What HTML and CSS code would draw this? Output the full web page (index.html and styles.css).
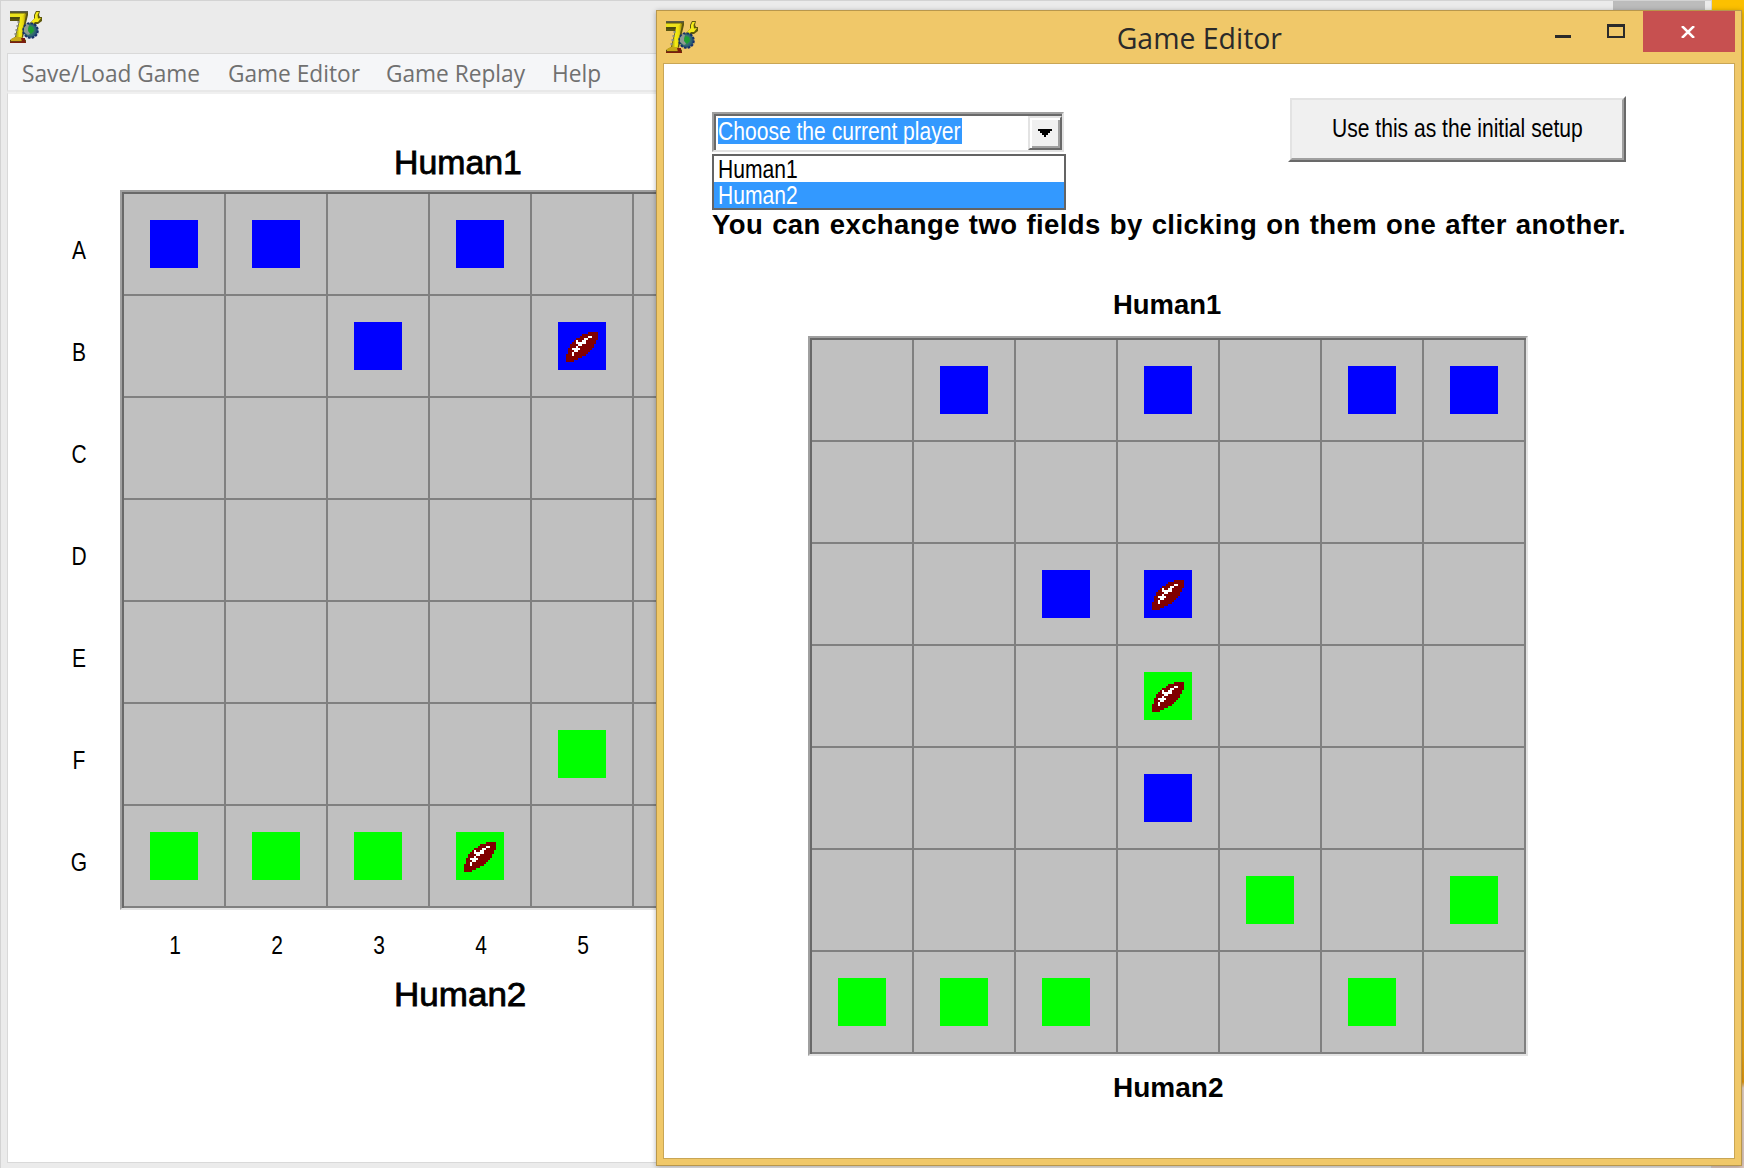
FILE: index.html
```html
<!DOCTYPE html>
<html lang="en">
<head>
<meta charset="utf-8">
<title>Game Editor</title>
<link rel="stylesheet" href="styles.css">
</head>
<body>
<svg class="defs" width="0" height="0" aria-hidden="true">
  <defs>
    <linearGradient id="gold" x1="0" y1="0" x2="1" y2="0">
      <stop offset="0" stop-color="#8a8416"/><stop offset=".4" stop-color="#f6ee12"/><stop offset=".7" stop-color="#e8d80e"/><stop offset="1" stop-color="#8d7a08"/>
    </linearGradient>
    <radialGradient id="globe" cx=".4" cy=".45" r=".6">
      <stop offset="0" stop-color="#2e9a3c"/><stop offset=".5" stop-color="#3c7a6a"/><stop offset="1" stop-color="#1d4a78"/>
    </radialGradient>
    <symbol id="app" viewBox="0 0 32 32">
      <path d="M0 0h18v4l-3 12-2 11 3 2v3H0v-3l5-3 4-16H0z" fill="#5a5510"/>
      <path d="M0 0h18v1.5H0z" fill="#5c5d48"/>
      <path d="M0 2.5h15l-1 3.5H0z" fill="#ece31c"/>
      <path d="M0 6h10v2H0z" fill="#4c4a10"/>
      <path d="M10 6l6.500-4-3 13-2 13H5l4-15z" fill="url(#gold)"/>
      <path d="M1 28l4-2h7l2 2v2H1z" fill="#c8a818"/>
      <path d="M0 30.500h16V32H0zM11 27h4v4h-3z" fill="#7c1c0c"/>
      <path d="M7.500 10h2v2h-2zM6.500 14h2v2h-2zM5.500 18h2v2h-2zM4.500 22h2v2h-2z" fill="#8f9086"/>
      <path d="M26 0h4l-1 4 1 2h2v4l-4 3h-3l-3 3-3-3 5-5V4z" fill="#5f590c"/>
      <path d="M26.500 1h2.500l-1.500 3 .5 3.500 3-.5-3 4h-3l-3 3-2-2 5-5V4z" fill="#f4ea18"/>
      <circle cx="20.500" cy="19.500" r="7.300" fill="url(#globe)" stroke="#17306a" stroke-width="2" stroke-dasharray="2.600 1.200"/>
      <path d="M14 17l3-4 2 1-1 4 2 5-2 1-4-3z" fill="#8f9a92"/>
      <path d="M19 15l4 1 1 4-3 3-3-3z" fill="#1fa033"/>
    </symbol>
    <symbol id="ball" viewBox="0 0 24 24">
      <g shape-rendering="crispEdges">
        <path fill="#800000" d="M15 5h5v4h-1v2h-1v2h-1v1h-1v1h-1v1h-1v1h-2v1h-2v1H8v1H4v-4h1v-3h1v-2h1v-1h1v-1h1V8h2V7h1V6h3z"/>
        <path fill="#fff" d="M15 7h2v1h-2zM13 8h2v1h-2zM9 9h1v1H9zM12 9h2v1h-2zM9 10h5v1H9zM10 11h2v1h-2zM9 12h1v1H9zM7 13h4v1H7zM8 14h2v1H8zM7 15h1v2H7z"/>
      </g>
    </symbol>
  </defs>
</svg>

<div class="desktop">
  <section class="window main-window">
    <header class="titlebar">
      <svg class="app-icon"><use href="#app"/></svg>
      <span class="inactive-close"></span>
    </header>
    <nav class="menu">
      <span class="menu-item save">Save/Load Game</span>
      <span class="menu-item editor">Game Editor</span>
      <span class="menu-item replay">Game Replay</span>
      <span class="menu-item help">Help</span>
    </nav>
    <div class="main-body">
      <h2 class="player">Human1</h2>
      <div class="board-area">
        <div class="row-labels">
          <span>A</span><span>B</span><span>C</span><span>D</span><span>E</span><span>F</span><span>G</span>
        </div>
        <div class="board">
          <i class="piece blue" style="grid-area:1/1"></i>
          <i class="piece blue" style="grid-area:1/2"></i>
          <i class="piece blue" style="grid-area:1/4"></i>
          <i class="piece blue" style="grid-area:2/3"></i>
          <i class="piece blue" style="grid-area:2/5"><svg><use href="#ball"/></svg></i>
          <i class="piece green" style="grid-area:6/5"></i>
          <i class="piece green" style="grid-area:7/1"></i>
          <i class="piece green" style="grid-area:7/2"></i>
          <i class="piece green" style="grid-area:7/3"></i>
          <i class="piece green" style="grid-area:7/4"><svg><use href="#ball"/></svg></i>
        </div>
      </div>
      <div class="col-labels"><span>1</span><span>2</span><span>3</span><span>4</span><span>5</span></div>
      <h2 class="player below">Human2</h2>
    </div>
  </section>

  <section class="window editor-window">
    <header class="titlebar">
      <svg class="app-icon"><use href="#app"/></svg>
      <h1 class="window-title"><span>Game Editor</span></h1>
      <div class="controls">
        <span class="minimize"></span>
        <span class="maximize"></span>
        <span class="close"><svg width="14" height="12" viewBox="0 0 14 12"><path d="M1 0l12 12M13 0L1 12" stroke="#fff" stroke-width="2.5"/></svg></span>
      </div>
    </header>
    <div class="editor-body">
      <div class="toolbar">
        <div class="combo">
          <span class="selection"><span class="sys">Choose the current player</span></span>
          <span class="arrow"><svg width="14" height="8" viewBox="0 0 14 8" shape-rendering="crispEdges"><path d="M0 0h14v2h-2v2h-2v2H8v2H6V6H4V4H2V2H0z"/></svg></span>
          <div class="options">
            <div class="option"><span class="sys">Human1</span></div>
            <div class="option selected"><span class="sys">Human2</span></div>
          </div>
        </div>
        <div class="button"><div class="face"><span class="sys">Use this as the initial setup</span></div></div>
      </div>
      <p class="hint">You can exchange two fields by clicking on them one after another.</p>
      <h2 class="player">Human1</h2>
      <div class="board">
        <i class="piece blue" style="grid-area:1/2"></i>
        <i class="piece blue" style="grid-area:1/4"></i>
        <i class="piece blue" style="grid-area:1/6"></i>
        <i class="piece blue" style="grid-area:1/7"></i>
        <i class="piece blue" style="grid-area:3/3"></i>
        <i class="piece blue" style="grid-area:3/4"><svg><use href="#ball"/></svg></i>
        <i class="piece green" style="grid-area:4/4"><svg><use href="#ball"/></svg></i>
        <i class="piece blue" style="grid-area:5/4"></i>
        <i class="piece green" style="grid-area:6/5"></i>
        <i class="piece green" style="grid-area:6/7"></i>
        <i class="piece green" style="grid-area:7/1"></i>
        <i class="piece green" style="grid-area:7/2"></i>
        <i class="piece green" style="grid-area:7/3"></i>
        <i class="piece green" style="grid-area:7/6"></i>
      </div>
      <h2 class="player below">Human2</h2>
    </div>
  </section>
</div>
</body>
</html>
```

FILE: styles.css
```css
* { box-sizing: border-box; }
html, body { height: 1168px; overflow: hidden; }
body { margin: 0; font-family: "Liberation Sans", Arial, sans-serif; color: #000; }
h1, h2, p { margin: 0; font-weight: 400; }
svg { display: block; }
.defs { position: absolute; }

.desktop {
  position: relative;
  width: 1744px;
  height: 1168px;
  overflow: hidden;
  background: linear-gradient(#fcc000 0, #fbbd00 600px, #efac18 1050px, #e59a10 1082px, #e8d5c8 1088px, #e3cdc4 1168px);
}

.window { position: absolute; display: flex; flex-direction: column; }
.app-icon { width: 32px; height: 32px; flex: none; }

/* Inactive window behind */
.main-window {
  left: 0;
  top: 0;
  width: 1712px;
  height: 1180px;
  padding: 0 7px;
  background: #ebebeb;
  border: 1px solid #d3d3d3;
}
.main-window .titlebar { display: flex; justify-content: space-between; height: 52px; padding: 10px 0 0 2px; }
.inactive-close { width: 92px; height: 32px; margin: -10px -1px 0 0; background: #bcbcbc; }
.menu {
  display: flex;
  height: 39px;
  margin-left: -1px;
  padding-left: 14px;
  background: #f5f6f8;
  border: 1px solid #d9d9d9;
  border-bottom: 2px solid #e8e8e8;
  border-right: 0;
  font: 24px/38px "Open Sans", sans-serif;
  color: #707070;
}
.menu-item { white-space: nowrap; transform-origin: 0 50%; transform: scaleX(.945); flex: none; }
.menu-item.save { width: 206px; }
.menu-item.editor { width: 158px; }
.menu-item.replay { width: 166px; }

.main-body {
  flex: none;
  height: 1071px;
  margin-left: -1px;
  background: #fff;
  border: 1px solid #d9d9d9;
  border-top: 2px solid #f0f0f0;
}
.main-body .player {
  margin: 48px 0 0 386px;
  height: 48px;
  font-size: 33.5px;
  line-height: 41px;
  -webkit-text-stroke: .8px #000;
  transform-origin: 0 50%;
  transform: scaleX(1.01);
}
.board-area { display: flex; }
.row-labels {
  display: grid;
  grid-template-rows: repeat(7, 102px);
  width: 112px;
  padding: 10px 0 0 57px;
  font-size: 25px;
}
.row-labels span, .col-labels span { text-align: center; transform: scaleX(.84); }
.row-labels span { width: 28px; line-height: 101px; }
.col-labels {
  display: grid;
  grid-template-columns: repeat(5, 102px);
  padding: 16px 0 0 116px;
  font-size: 25px;
  line-height: 30px;
}
.main-body .player.below { margin-top: 14px; transform: scaleX(1.045); }

.board {
  display: grid;
  flex: none;
  grid-template: repeat(7, 102px) / repeat(7, 102px);
  width: 720px;
  height: 720px;
  padding: 2px 0 0 2px;
  border: 2px solid;
  border-color: #a0a0a0 #e3e3e3 #e3e3e3 #a0a0a0;
  background:
    linear-gradient(#696969, #696969) 0 0 / 100% 2px no-repeat,
    linear-gradient(#696969, #696969) 0 0 / 2px 100% no-repeat,
    repeating-linear-gradient(90deg, transparent 0 100px, #808080 100px 102px) 2px 0 / 714px 716px no-repeat,
    repeating-linear-gradient(transparent 0 100px, #808080 100px 102px) 0 2px / 716px 714px no-repeat,
    #c0c0c0;
}
.piece { width: 48px; height: 48px; margin: 26px; }
.piece svg { width: 48px; height: 48px; }
.blue { background: #00f; }
.green { background: #0f0; }

/* Active editor window */
.editor-window {
  left: 656px;
  top: 10px;
  width: 1086px;
  height: 1156px;
  padding: 0 6px 6px;
  background: #f0c869;
  border: 1px solid #b8974c;
  box-shadow: 0 1px 5px rgba(0, 0, 0, .3);
}
.editor-window .titlebar { position: relative; display: flex; height: 52px; padding: 10px 0 0 3px; }
.window-title { flex: 1; padding-right: 35px; text-align: center; font: 29px/34px "Open Sans", sans-serif; color: #2a2a2a; }
.window-title span { display: inline-block; transform: scaleX(.98); }
.controls { position: absolute; right: 0; top: 0; display: flex; height: 41px; }
.minimize { width: 16px; height: 3px; margin: 24px 36px 0 0; background: #2a2a2a; }
.maximize { width: 18px; height: 14px; margin: 13px 18px 0 0; border: 2px solid #2a2a2a; border-top-width: 3px; }
.close { display: flex; align-items: center; justify-content: center; width: 92px; padding-right: 2px; background: #c75050; }

.editor-body { flex: 1; background: #fff; border: 1px solid #c9a655; padding: 32px 108px 0 48px; }
.toolbar { display: flex; justify-content: space-between; }
.sys { display: inline-block; white-space: nowrap; font-size: 25px; line-height: 26px; transform: scaleX(.843); transform-origin: 0 50%; }

.combo {
  position: relative;
  display: flex;
  justify-content: space-between;
  width: 352px;
  height: 40px;
  margin-top: 16px;
  border: 2px solid;
  border-color: #a0a0a0 #e3e3e3 #e3e3e3 #a0a0a0;
  box-shadow: inset 2px 2px #696969;
}
.selection { width: 244px; height: 26px; margin: 4px 0 0 4px; background: #3399ff; color: #fff; }
.arrow {
  display: flex;
  align-items: center;
  justify-content: center;
  width: 34px;
  height: 34px;
  margin-top: 2px;
  background: #f0f0f0;
  border: 2px solid;
  border-color: #e3e3e3 #696969 #696969 #e3e3e3;
  box-shadow: inset 2px 2px #fff, inset -2px -2px #a0a0a0;
}
.options {
  position: absolute;
  left: -2px;
  top: 40px;
  width: 354px;
  border: 2px solid #646464;
  background: #fff;
}
.option { height: 26px; padding-left: 4px; }
.option.selected { background: #3399ff; color: #fff; }

.button { width: 338px; height: 66px; border: 2px solid; border-color: #fff #696969 #696969 #fff; }
.face {
  height: 100%;
  padding: 15px 0 0 40px;
  background: #f0f0f0;
  border: 2px solid;
  border-color: #e3e3e3 #a0a0a0 #a0a0a0 #e3e3e3;
}

.hint {
  margin-top: 46px;
  font-size: 27.5px;
  font-weight: 700;
  line-height: 34px;
  white-space: nowrap;
  letter-spacing: .4px;
  word-spacing: 1px;
}
.editor-body .player {
  margin: 45px 0 0 401px;
  height: 49px;
  font-size: 28px;
  font-weight: 700;
  line-height: 35px;
  transform-origin: 0 50%;
  transform: scaleX(.98);
}
.editor-body .board { margin-left: 96px; }
.editor-body .player.below { margin-top: 15px; line-height: 34px; transform: scaleX(1); }
```
